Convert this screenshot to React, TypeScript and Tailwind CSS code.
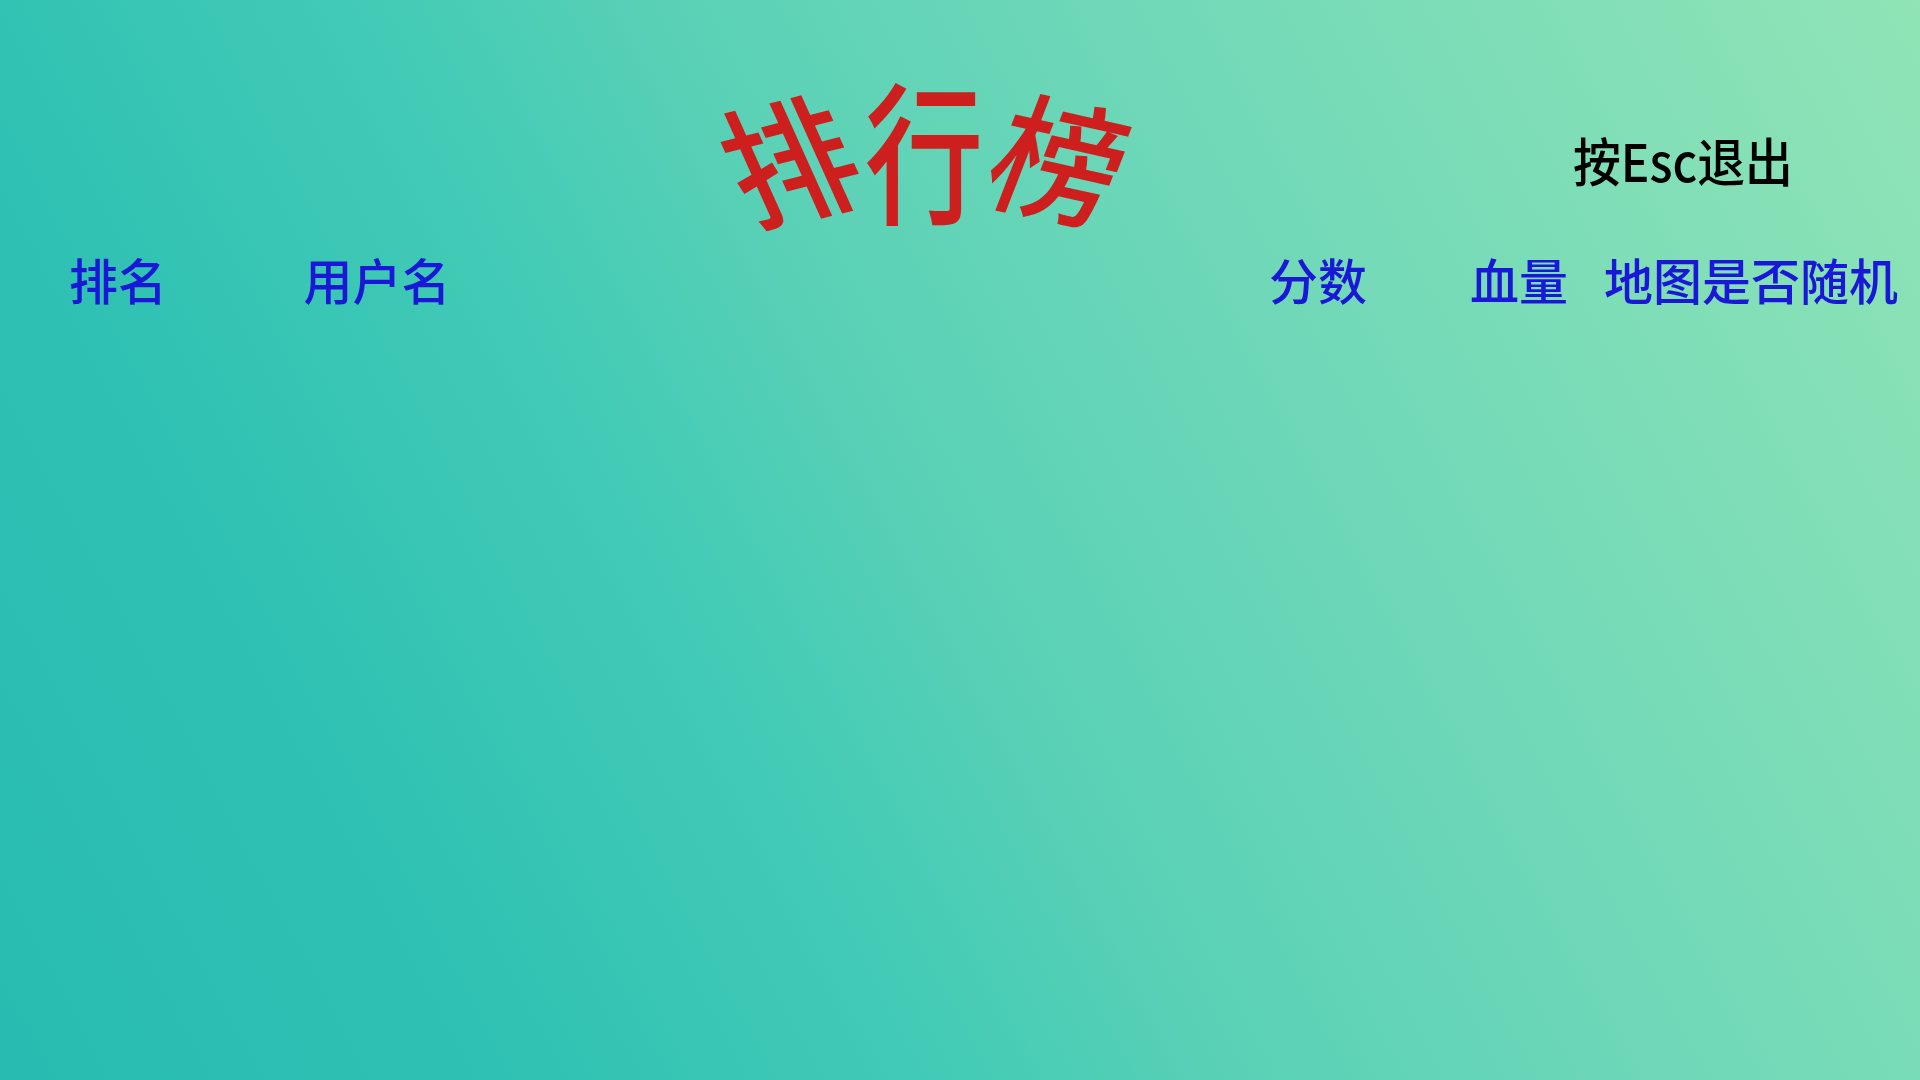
const cjk = "font-['Noto_Sans_CJK_SC','Noto_Sans_CJK_TC',sans-serif]";

function HeaderCell({ className, children }: { className: string; children: React.ReactNode }) {
  return <div className={"shrink-0 whitespace-nowrap text-center " + className}>{children}</div>;
}

export default function App() {
  return (
    <div className={"h-screen w-full overflow-hidden bg-[linear-gradient(62deg,#28bbb1_0%,#2fc1b3_20%,#43cbb6_38%,#5ad1b6_50%,#72d9b8_70%,#90e4b6_100%)] " + cjk}>
      <div className="flex h-[237px] items-start">
        {/* warped title, one transform per glyph */}
        <h1 className="ml-[716px] mt-[84px] flex h-[152px] w-[424px] items-end text-[128px] font-medium leading-[152px] text-[#cc1f1e]">
          <span className="inline-block w-[142px] origin-bottom text-center [transform:matrix(0.95,-0.24,0.44,0.98,34,-6)]">排</span>
          <span className="inline-block w-[132px] origin-bottom text-center [transform:matrix(0.93,0,0,1.2,0,2)]">行</span>
          <span className="inline-block w-[150px] origin-bottom text-center [transform:matrix(0.98,0.22,-0.38,0.98,-32,-6)]">榜</span>
        </h1>
        <div className="ml-[433px] mt-[128px] origin-left whitespace-nowrap text-[52px] font-medium leading-[64px] text-black [transform:scaleX(0.92)]">
          按Esc退出
        </div>
      </div>
      <div className="flex h-[84px] items-center text-[49px] font-medium leading-[64px] text-[#1a18d6]">
        <HeaderCell className="ml-[69px] w-[98px]">排名</HeaderCell>
        <HeaderCell className="ml-[135px] w-[150px]">用户名</HeaderCell>
        <HeaderCell className="ml-[817px] w-[98px]">分数</HeaderCell>
        <HeaderCell className="ml-[103px] w-[98px]">血量</HeaderCell>
        <HeaderCell className="ml-[34px] w-[298px]">地图是否随机</HeaderCell>
      </div>
    </div>
  );
}
